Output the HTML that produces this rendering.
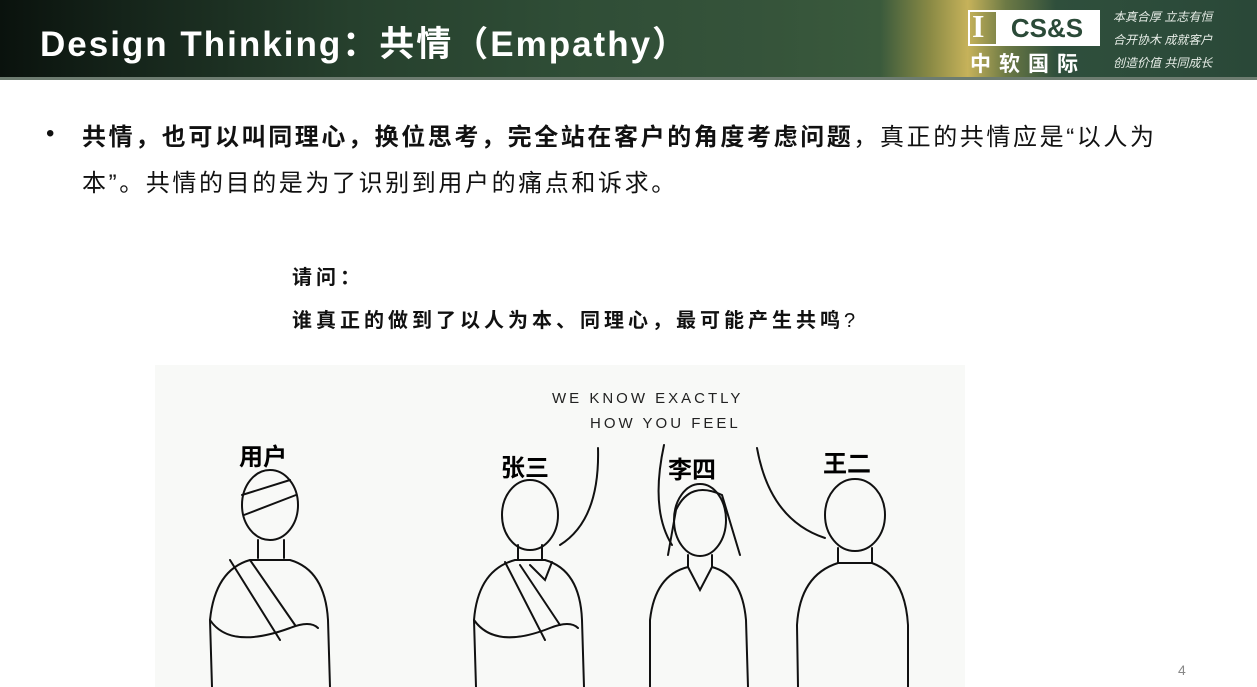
<!DOCTYPE html>
<html><head><meta charset="utf-8"><style>
*{margin:0;padding:0;box-sizing:border-box}
body{width:1257px;height:687px;overflow:hidden;background:#fff;font-family:"Liberation Sans","Noto Sans CJK SC",sans-serif;position:relative}
.hdr{position:absolute;left:0;top:0;width:1257px;height:80px;background:linear-gradient(90deg,#0a120d 0%,#15241a 10%,#26402d 28%,#2f4d36 45%,#35533a 60%,#3a5a3c 70%,#8a8a45 74%,#c6b25a 77%,#6d7a45 80%,#2f4f3c 84%,#2a4838 100%)}
.hdr:after{content:"";position:absolute;left:0;top:77px;width:100%;height:3px;background:#6d7c70}
.title{position:absolute;left:40px;top:16px;color:#fff;font-size:35px;font-weight:bold;letter-spacing:2px}
.logo{position:absolute;left:968px;top:10px}
.p{position:absolute;font-size:24px;color:#111;letter-spacing:2.6px}
.q{position:absolute;left:292px;font-size:20px;font-weight:bold;color:#111;letter-spacing:4px}
</style></head><body>
<div class="hdr"></div>
<div class="title">Design Thinking：共情（Empathy）</div>
<div class="logo">
<div style="position:absolute;left:0;top:0;width:132px;height:36px;border:2px solid #fff"></div>
<div style="position:absolute;left:4px;top:-2px;color:#fff;font:bold 32px 'Liberation Serif',serif">I</div>
<div style="position:absolute;left:28px;top:2px;width:102px;height:32px;background:#fff;color:#2b4a38;font:bold 26px 'Liberation Sans',sans-serif;text-align:center;line-height:32px">CS&amp;S</div>
<div style="position:absolute;left:2px;top:38px;color:#fff;font-size:21px;font-weight:bold;letter-spacing:8px;white-space:nowrap">中软国际</div>
<div style="position:absolute;left:145px;top:-4px;color:#e8eee8;font-size:12px;line-height:23px;white-space:nowrap;font-style:italic">本真合厚 立志有恒<br>合开协木 成就客户<br>创造价值 共同成长</div>
</div>
<div class="p" style="left:46px;top:120px">•</div>
<div class="p" style="left:82px;top:115px;line-height:46px;white-space:nowrap"><b>共情，也可以叫同理心，换位思考，完全站在客户的角度考虑问题</b>，真正的共情应是“以人为<br>本”。共情的目的是为了识别到用户的痛点和诉求。</div>
<div class="q" style="top:261px">请问：</div>
<div class="q" style="top:304px">谁真正的做到了以人为本、同理心，最可能产生共鸣<span style="font-weight:normal">?</span></div>
<svg style="position:absolute;left:155px;top:365px" width="810" height="322" viewBox="155 365 810 322">
<rect x="155" y="365" width="810" height="322" fill="#f8f9f7"/>
<g font-family="Liberation Sans,sans-serif" font-size="15" fill="#222" letter-spacing="3">
<text x="552" y="403">WE KNOW EXACTLY</text><text x="590" y="428">HOW YOU FEEL</text></g>
<g font-family="Liberation Sans,Noto Sans CJK SC,sans-serif" font-size="24" font-weight="bold" fill="#000">
<text x="239" y="465">用户</text><text x="501" y="476">张三</text><text x="668" y="478">李四</text><text x="823" y="472">王二</text></g>
<g fill="none" stroke="#111" stroke-width="2" stroke-linecap="round">
<path d="M598 448 Q600 520 560 545"/><path d="M664 445 Q650 510 672 545"/><path d="M757 448 Q770 520 825 538"/>
<ellipse cx="270" cy="505" rx="28" ry="35"/><path d="M242 495 L290 480 M244 515 L296 495"/><path d="M258 540 v18 M284 540 v18"/>
<path d="M250 560 Q215 570 210 620 L212 687 M290 560 Q325 570 328 620 L330 687 M250 560 h40"/><path d="M230 560 L280 640 M250 560 L295 625"/><path d="M210 620 Q230 650 290 628 Q310 620 318 628"/>
<ellipse cx="530" cy="515" rx="28" ry="35"/><path d="M518 545 v15 M542 545 v15"/>
<path d="M515 560 Q478 570 474 620 L476 687 M545 560 Q580 570 582 620 L584 687 M515 560 h30"/><path d="M505 562 L545 640 M520 565 L560 625 M530 565 L545 580 L552 562"/><path d="M474 620 Q495 650 550 628 Q570 620 578 628"/>
<ellipse cx="700" cy="520" rx="26" ry="36"/><path d="M676 510 Q690 480 722 495 L740 555 M676 510 L668 555"/><path d="M688 555 v12 M712 555 v12"/>
<path d="M688 567 Q655 575 650 620 L650 687 M712 567 Q742 575 746 620 L748 687 M688 567 L700 590 L712 567"/>
<ellipse cx="855" cy="515" rx="30" ry="36"/><path d="M838 548 v15 h34 v-15"/>
<path d="M838 563 Q800 575 797 625 L798 687 M872 563 Q905 575 908 625 L908 687"/>
</g></svg>
<div style="position:absolute;left:1178px;top:662px;font-size:14px;color:#888">4</div>
</body></html>
